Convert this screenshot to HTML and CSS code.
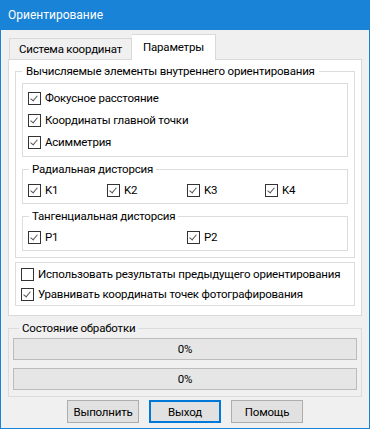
FILE: index.html
```html
<!DOCTYPE html>
<html>
<head>
  <title>Ориентирование</title>
  <link rel="stylesheet" href="styles.css">
</head>
<body>
  <div class="window">
    <div class="titlebar">Ориентирование</div>
    <div class="client">
      <div class="tabs">
        <div class="tab">Система координат</div>
        <div class="tab active">Параметры</div>
      </div>
      <div class="tab-panel">
        <fieldset class="group outer">
          <legend>Вычисляемые элементы внутреннего ориентирования</legend>
          <div class="box elements">
            <label class="check"><span class="cb on"></span>Фокусное расстояние</label>
            <label class="check"><span class="cb on"></span>Координаты главной точки</label>
            <label class="check"><span class="cb on"></span>Асимметрия</label>
          </div>
          <fieldset class="group sub">
            <legend>Радиальная дисторсия</legend>
            <div class="row4">
              <label class="check"><span class="cb on"></span>K1</label>
              <label class="check"><span class="cb on"></span>K2</label>
              <label class="check"><span class="cb on"></span>K3</label>
              <label class="check"><span class="cb on"></span>K4</label>
            </div>
          </fieldset>
          <fieldset class="group sub">
            <legend>Тангенциальная дисторсия</legend>
            <div class="row2">
              <label class="check"><span class="cb on"></span>P1</label>
              <label class="check"><span class="cb on"></span>P2</label>
            </div>
          </fieldset>
        </fieldset>
        <div class="box options">
          <label class="check"><span class="cb"></span>Использовать результаты предыдущего ориентирования</label>
          <label class="check"><span class="cb on"></span>Уравнивать координаты точек фотографирования</label>
        </div>
      </div>
      <fieldset class="group status">
        <legend>Состояние обработки</legend>
        <div class="progress">0%</div>
        <div class="progress">0%</div>
      </fieldset>
      <div class="buttons">
        <button type="button" class="btn">Выполнить</button>
        <button type="button" class="btn default">Выход</button>
        <button type="button" class="btn">Помощь</button>
      </div>
    </div>
  </div>
</body>
</html>
```

FILE: styles.css
```css
body {
  margin: 0;
  font-family: Roboto, "Liberation Sans", sans-serif;
  font-size: 11.5px;
  letter-spacing: -0.2px;
  color: #000;
  background-color: #f0f0f0;
}

.window {
  width: 370px;
  height: 429px;
  box-sizing: border-box;
  border: 1px solid #1883d7;
  border-top: none;
  background-color: #f0f0f0;
  display: flex;
  flex-direction: column;
}

.titlebar {
  height: 30px;
  line-height: 30px;
  padding-left: 7px;
  background-color: #1883d7;
  color: #fff;
  font-size: 12px;
  letter-spacing: 0;
}

.client {
  padding: 4px 7px 0 7px;
}

/* tab strip */
.tabs {
  display: flex;
  align-items: flex-end;
  height: 26px;
  padding-left: 1px;
  margin-bottom: -1px;
  position: relative;
}

.tab {
  height: 21px;
  line-height: 20px;
  box-sizing: border-box;
  padding: 0 9px;
  border: 1px solid #d9d9d9;
  border-bottom: none;
  background-color: #f0f0f0;
  margin-bottom: 1px;
  white-space: nowrap;
}

.tab.active {
  height: 26px;
  line-height: 24px;
  padding: 0 11px;
  background-color: #fff;
  border-left: none;
  margin-bottom: 0;
}

.tab-panel {
  height: 257px;
  box-sizing: border-box;
  border: 1px solid #d9d9d9;
  background-color: #fff;
  padding: 3px 6px 0 6px;
}

/* group boxes */
.group {
  margin: 0;
  min-width: 0;
  border: 1px solid #dcdcdc;
  padding: 0 6px;
}

.group legend {
  padding: 0 3px;
  line-height: 16px;
  white-space: nowrap;
}

.outer {
  padding-bottom: 6px;
}

.outer > legend {
  padding: 0 4px;
}

.box {
  border: 1px solid #dcdcdc;
  padding-left: 5px;
}

.elements {
  margin-top: 4px;
  padding-top: 3px;
  padding-bottom: 3px;
}

.elements .check {
  height: 22px;
}

.sub {
  margin-top: 4px;
  padding: 2px 0 2px 5px;
}

.sub legend {
  margin-left: 1px;
}

.sub .check {
  height: 22px;
}

.row4 {
  display: grid;
  grid-template-columns: 79px 80px 78px 1fr;
}

.row2 {
  display: grid;
  grid-template-columns: 159px 1fr;
}

.options {
  margin-top: 4px;
  height: 44px;
  box-sizing: border-box;
  padding-top: 1px;
}

.options .check {
  height: 20px;
}

/* checkbox */
.check {
  display: flex;
  align-items: center;
  white-space: nowrap;
}

.cb {
  width: 13px;
  height: 13px;
  box-sizing: border-box;
  border: 1px solid #333;
  background-color: #fff;
  margin-right: 4px;
  flex-shrink: 0;
  position: relative;
}

.cb.on::after {
  content: "";
  position: absolute;
  left: 3px;
  top: 1px;
  width: 3px;
  height: 6px;
  border-right: 1px solid #555;
  border-bottom: 1px solid #555;
  transform: rotate(40deg);
}

/* processing state */
.status {
  margin-top: 4px;
  padding: 2px 4px 6px 4px;
}

.status legend {
  margin-left: 6px;
}

.progress {
  height: 22px;
  box-sizing: border-box;
  border: 1px solid #bcbcbc;
  background-color: #e6e6e6;
  text-align: center;
  line-height: 20px;
}

.progress + .progress {
  margin-top: 8px;
}

.buttons {
  display: flex;
  justify-content: center;
  gap: 10px;
  margin-top: 3px;
}

.btn {
  width: 72px;
  height: 23px;
  font-family: inherit;
  font-size: 11.5px;
  letter-spacing: -0.2px;
  color: #000;
  background-color: #e1e1e1;
  border: 1px solid #adadad;
  padding: 0;
}

.btn.default {
  border-color: #0078d7;
  box-shadow: inset 0 0 0 1px #0078d7;
}
```
